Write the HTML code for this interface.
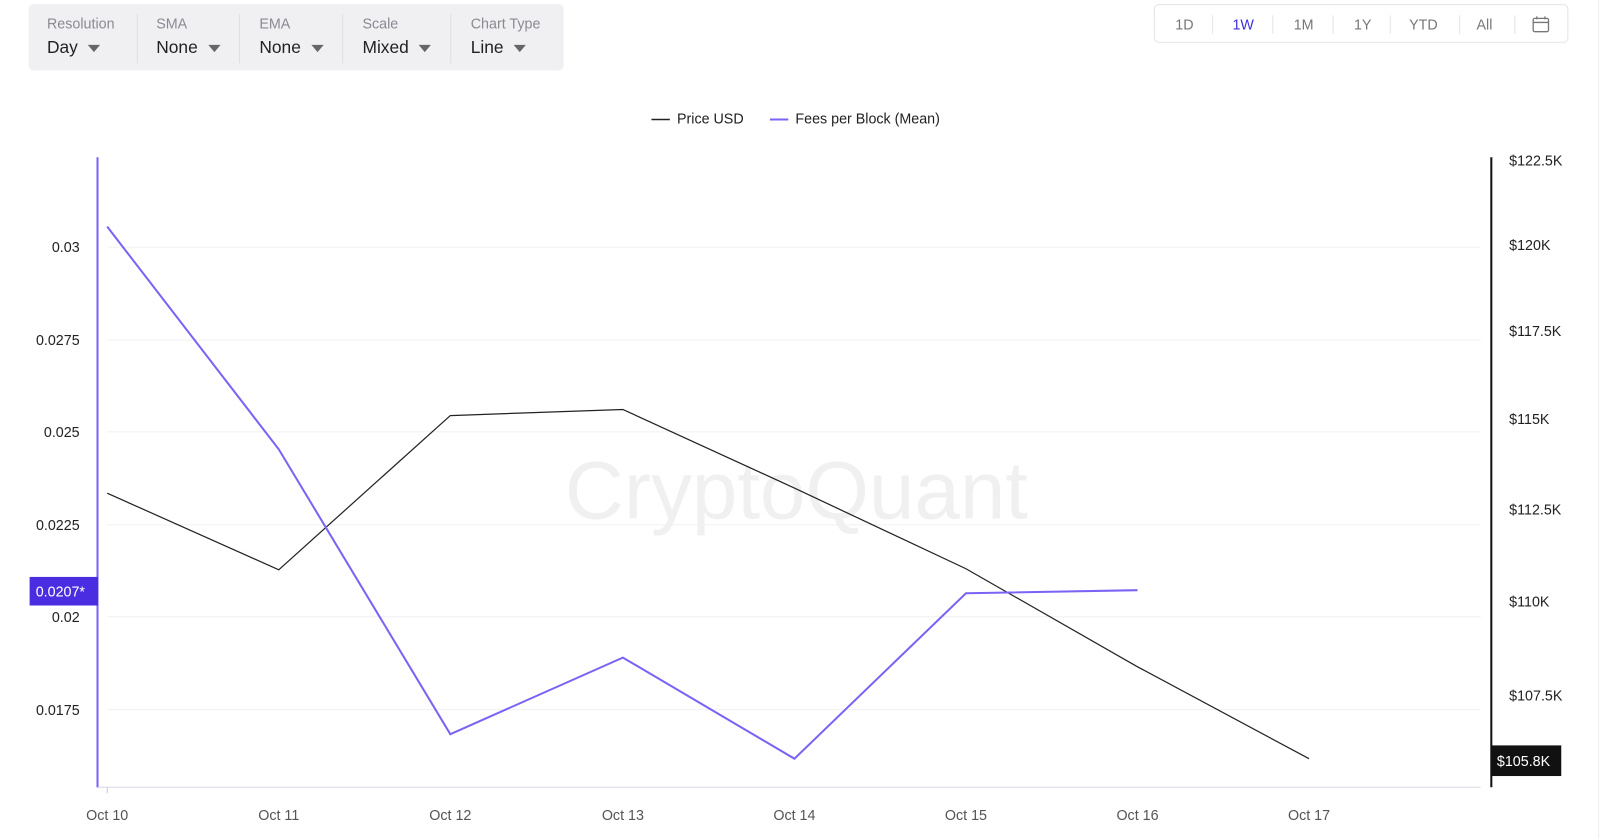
<!DOCTYPE html>
<html><head><style>
body{margin:0;width:1600px;height:839px;background:#fff;font-family:"Liberation Sans",sans-serif;position:relative;overflow:hidden}
#w{position:absolute;left:0;top:0;width:1567px;height:822px;transform:scale(1.0211);transform-origin:0 0}
.bar{position:absolute;left:28px;top:4px;width:524px;height:65px;background:#f0f0f2;border-radius:5px}
.it{position:absolute;top:0;height:65px}
.it .l{position:absolute;top:11px;font-size:14px;color:#8a8a92;white-space:nowrap}
.it .v{position:absolute;top:33px;font-size:17px;color:#222;white-space:nowrap}
.tri{display:inline-block;width:0;height:0;border-left:6px solid transparent;border-right:6px solid transparent;border-top:7px solid #666;margin-left:10px;vertical-align:middle}
.sep{position:absolute;top:10px;width:1px;height:48px;background:#e0e0e4}
.rb{position:absolute;left:1130px;top:4px;width:406px;height:38px;border:1px solid #e4e4ea;border-radius:5px;box-sizing:border-box}
.rb span{position:absolute;top:11px;font-size:14px;color:#777}
.rb i{position:absolute;top:10px;width:1px;height:18px;background:#e4e4ea}
svg text{font-family:"Liberation Sans",sans-serif}
</style></head><body><div id="w">
<div class="bar">
<div class="it" style="left:18px"><div class="l">Resolution</div><div class="v">Day<span class="tri"></span></div></div>
<div class="sep" style="left:106px"></div>
<div class="it" style="left:125px"><div class="l">SMA</div><div class="v">None<span class="tri"></span></div></div>
<div class="sep" style="left:206px"></div>
<div class="it" style="left:226px"><div class="l">EMA</div><div class="v">None<span class="tri"></span></div></div>
<div class="sep" style="left:307px"></div>
<div class="it" style="left:327px"><div class="l">Scale</div><div class="v">Mixed<span class="tri"></span></div></div>
<div class="sep" style="left:413px"></div>
<div class="it" style="left:433px"><div class="l">Chart Type</div><div class="v">Line<span class="tri"></span></div></div>
</div>
<div class="rb">
<span style="left:20px">1D</span><i style="left:56px"></i>
<span style="left:76px;color:#3d2ee0">1W</span><i style="left:115px"></i>
<span style="left:136px">1M</span><i style="left:174px"></i>
<span style="left:195px">1Y</span><i style="left:230px"></i>
<span style="left:249px">YTD</span><i style="left:298px"></i>
<span style="left:315px">All</span><i style="left:352px"></i>
<svg style="position:absolute;left:369px;top:10px" width="18" height="18" viewBox="0 0 18 18" fill="none" stroke="#777" stroke-width="1.3"><rect x="1.5" y="3" width="15" height="13" rx="1.5"/><line x1="1.5" y1="7" x2="16.5" y2="7"/><line x1="5" y1="1" x2="5" y2="4"/><line x1="13" y1="1" x2="13" y2="4"/></svg>
</div>
<svg style="position:absolute;left:0;top:0" width="1567" height="822">
<line x1="638" y1="117" x2="656" y2="117" stroke="#222" stroke-width="1.5"/>
<text x="663" y="121" font-size="14" fill="#222">Price USD</text>
<line x1="754" y1="117" x2="772" y2="117" stroke="#7b63f5" stroke-width="2"/>
<text x="779" y="121" font-size="14" fill="#222">Fees per Block (Mean)</text>
<g stroke="#f0f0f2" stroke-width="1">
<line x1="105" y1="242" x2="1450" y2="242"/><line x1="105" y1="333" x2="1450" y2="333"/><line x1="105" y1="423" x2="1450" y2="423"/><line x1="105" y1="514" x2="1450" y2="514"/><line x1="105" y1="604" x2="1450" y2="604"/><line x1="105" y1="695" x2="1450" y2="695"/>
</g>
<line x1="95" y1="771" x2="1450" y2="771" stroke="#d8d8e4" stroke-width="1"/>
<text x="780" y="508" font-size="80" fill="#f0f0f0" text-anchor="middle">CryptoQuant</text>
<g font-size="14" fill="#222" text-anchor="end">
<text x="78" y="247">0.03</text><text x="78" y="338">0.0275</text><text x="78" y="428">0.025</text><text x="78" y="519">0.0225</text><text x="78" y="609">0.02</text><text x="78" y="700">0.0175</text>
</g>
<g font-size="14" fill="#222">
<text x="1478" y="162">$122.5K</text><text x="1478" y="245">$120K</text><text x="1478" y="329">$117.5K</text><text x="1478" y="415">$115K</text><text x="1478" y="504">$112.5K</text><text x="1478" y="594">$110K</text><text x="1478" y="686">$107.5K</text>
</g>
<g font-size="14" fill="#555" text-anchor="middle">
<text x="105" y="803">Oct 10</text><text x="273" y="803">Oct 11</text><text x="441" y="803">Oct 12</text><text x="610" y="803">Oct 13</text><text x="778" y="803">Oct 14</text><text x="946" y="803">Oct 15</text><text x="1114" y="803">Oct 16</text><text x="1282" y="803">Oct 17</text>
</g>
<g stroke="#ccc"><line x1="105" y1="771" x2="105" y2="777"/></g>
<polyline fill="none" stroke="#222" stroke-width="1.2" points="105,483 273,558 441,407 610,401 778,478 946,557 1114,653 1282,743"/>
<polyline fill="none" stroke="#7b63f5" stroke-width="2" points="105,222 273,440 441,719 610,644 778,743 946,581 1114,578"/>
<line x1="95.5" y1="154" x2="95.5" y2="771" stroke="#7b63f5" stroke-width="2"/>
<line x1="1460.5" y1="154" x2="1460.5" y2="771" stroke="#111" stroke-width="2"/>
<rect x="29" y="565" width="67" height="28" fill="#4a2de0"/>
<text x="35" y="584" font-size="14" fill="#fff">0.0207*</text>
<rect x="1460" y="730" width="69" height="30" fill="#111"/>
<text x="1466" y="750" font-size="14" fill="#fff">$105.8K</text>
<line x1="1565.5" y1="0" x2="1565.5" y2="822" stroke="#eee"/>
</svg>
</div></body></html>
